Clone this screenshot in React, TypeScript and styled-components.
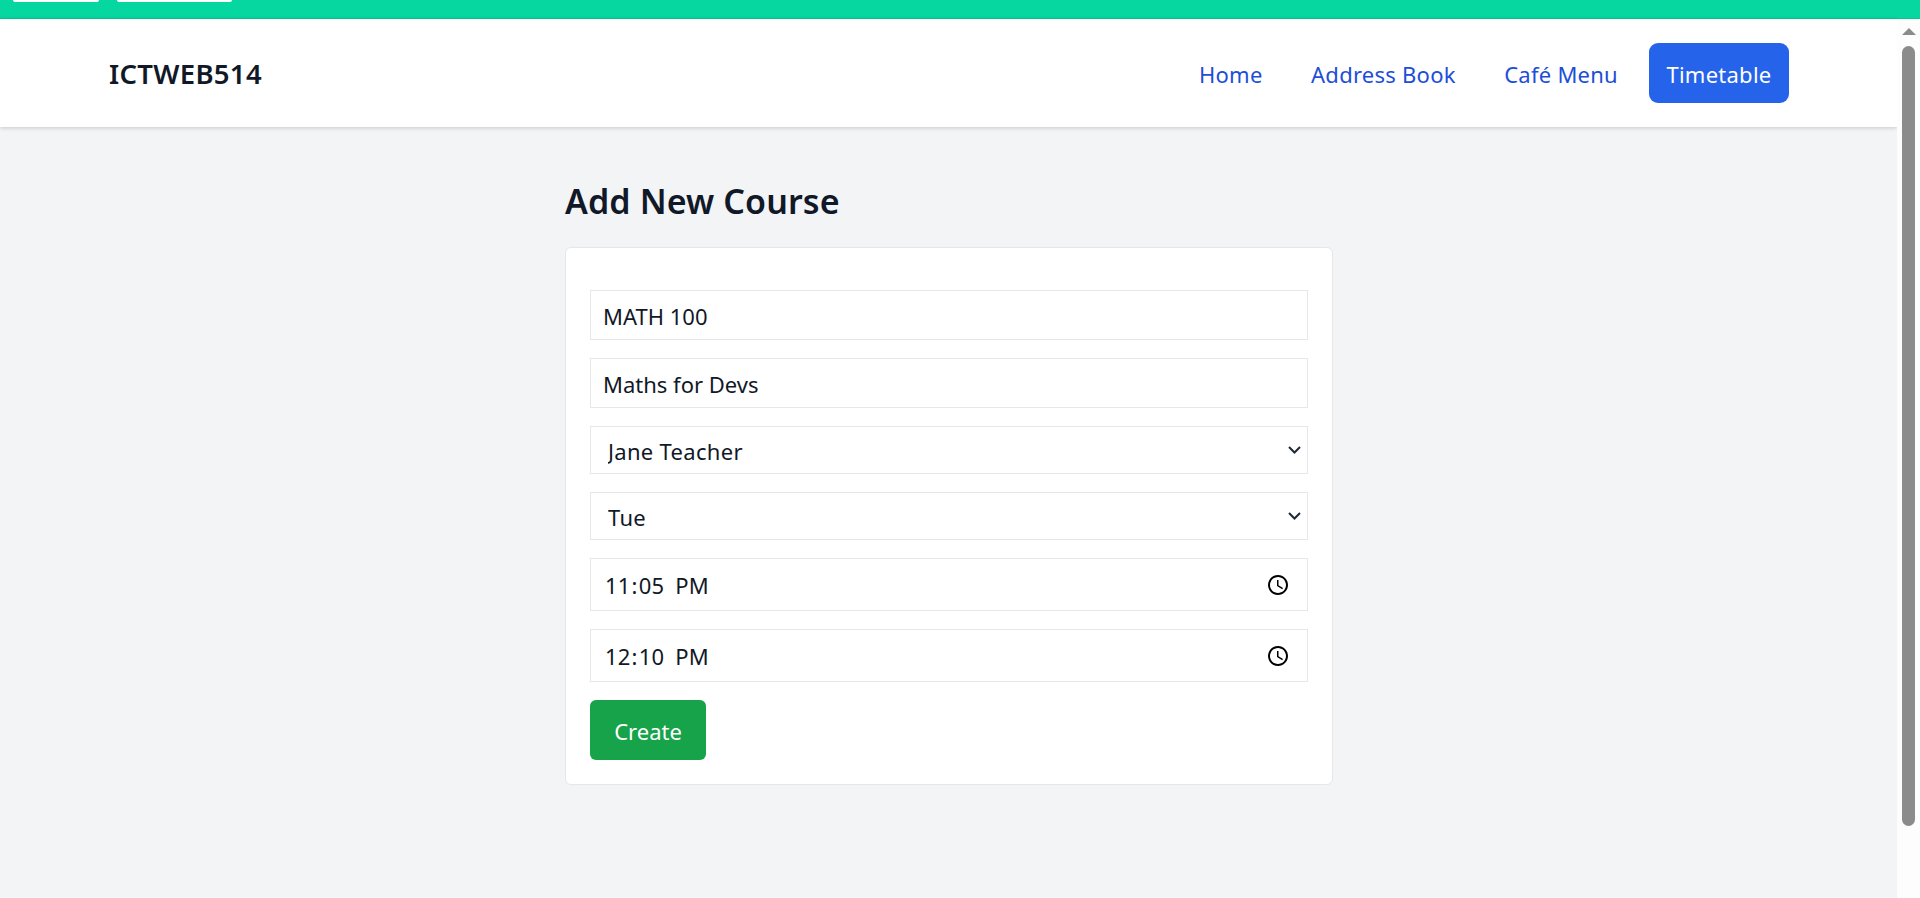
import styled, { createGlobalStyle } from "styled-components";

const GlobalStyle = createGlobalStyle`
  * {
    box-sizing: border-box;
  }

  html,
  body {
    margin: 0;
    height: 100%;
    overflow: hidden;
    background: #f3f4f6;
    font-family: "Noto Sans", "Open Sans", sans-serif;
    color: #111827;
  }
`;

function Chevron() {
  return (
    <ChevronIcon width="13" height="8" viewBox="0 0 13 8" fill="none">
      <path d="M1 1l5.5 5.5L12 1" stroke="#1f2937" strokeWidth="2" />
    </ChevronIcon>
  );
}

export default function App() {
  return (
    <>
      <GlobalStyle />
      <Shell>
        <TopStrip>
          <StripChip $width={86} />
          <StripChip $width={115} />
        </TopStrip>

        <Viewport>
          <Page>
            <Navbar>
              <Brand>ICTWEB514</Brand>
              <NavLinks>
                <NavLink href="#">Home</NavLink>
                <NavLink href="#">Address Book</NavLink>
                <NavLink href="#">Café Menu</NavLink>
                <NavLink href="#" $active>
                  Timetable
                </NavLink>
              </NavLinks>
            </Navbar>

            <Main>
              <Title>Add New Course</Title>
              <Card>
                <Field type="text" defaultValue="MATH 100" />
                <Field type="text" defaultValue="Maths for Devs" />
                <SelectWrap>
                  <Dropdown defaultValue="Jane Teacher">
                    <option>Jane Teacher</option>
                    <option>John Teacher</option>
                  </Dropdown>
                  <Chevron />
                </SelectWrap>
                <SelectWrap>
                  <Dropdown defaultValue="Tue">
                    <option>Mon</option>
                    <option>Tue</option>
                    <option>Wed</option>
                    <option>Thu</option>
                    <option>Fri</option>
                  </Dropdown>
                  <Chevron />
                </SelectWrap>
                <TimeField type="time" defaultValue="23:05" />
                <TimeField type="time" defaultValue="12:10" />
                <CreateButton type="button">Create</CreateButton>
              </Card>
            </Main>
          </Page>

          <Scrollbar>
            <ScrollArrow />
            <ScrollThumb />
          </Scrollbar>
        </Viewport>
      </Shell>
    </>
  );
}

const Shell = styled.div`
  height: 100vh;
  display: flex;
  flex-direction: column;
`;

const TopStrip = styled.div`
  height: 19px;
  flex: none;
  padding-left: 13px;
  display: flex;
  align-items: flex-start;
  gap: 18px;
  background: #06d6a0;
  border-bottom: 1px solid #05c896;
`;

const StripChip = styled.div<{ $width: number }>`
  width: ${({ $width }) => $width}px;
  height: 2px;
  background: #fff;
  border-radius: 0 0 5px 5px;
`;

const Viewport = styled.div`
  flex: 1;
  min-height: 0;
  display: flex;
`;

const Page = styled.div`
  flex: 1;
  min-width: 0;
`;

const Navbar = styled.nav`
  height: 108px;
  padding: 0 108px 0 109px;
  display: flex;
  align-items: center;
  justify-content: space-between;
  background: #fff;
  box-shadow: 0 1px 4px rgba(0, 0, 0, 0.18);
`;

const Brand = styled.div`
  font-size: 27.5px;
  font-weight: 600;
  letter-spacing: 0.3px;
  color: #111827;
`;

const NavLinks = styled.div`
  display: flex;
  align-items: center;
  gap: 13.5px;
`;

const NavLink = styled.a<{ $active?: boolean }>`
  height: 60px;
  padding: 2px 17.5px 0;
  display: flex;
  align-items: center;
  border-radius: 9px;
  font-size: 22px;
  letter-spacing: 0.25px;
  text-decoration: none;
  color: ${({ $active }) => ($active ? "#fff" : "#1d4ed8")};
  background: ${({ $active }) => ($active ? "#2563eb" : "transparent")};
`;

const Main = styled.main`
  width: 768px;
  margin-left: 565px;
  padding-top: 47px;
`;

const Title = styled.h1`
  margin: 0 0 18px;
  font-size: 34px;
  line-height: 55px;
  font-weight: 600;
  letter-spacing: 0.1px;
  color: #111827;
`;

const Card = styled.form`
  height: 538px;
  padding: 42px 24px 0;
  display: flex;
  flex-direction: column;
  align-items: flex-start;
  gap: 18px;
  background: #fff;
  border: 1px solid #e5e7eb;
  border-radius: 6px;
`;

const Field = styled.input`
  width: 100%;
  height: 50px;
  padding: 2px 12px 0;
  background: #fff;
  border: 1px solid #e5e7eb;
  border-radius: 0;
  outline: none;
  font-family: inherit;
  font-size: 22px;
  color: #111827;
`;

const SelectWrap = styled.div`
  position: relative;
  width: 100%;
  height: 48px;
`;

const Dropdown = styled.select`
  width: 100%;
  height: 100%;
  padding: 2px 17px 0;
  appearance: none;
  background: #fff;
  border: 1px solid #e5e7eb;
  border-radius: 0;
  outline: none;
  font-family: inherit;
  font-size: 22px;
  letter-spacing: 0.3px;
  color: #111827;
`;

const ChevronIcon = styled.svg`
  position: absolute;
  top: 20px;
  right: 7px;
  pointer-events: none;
`;

const TimeField = styled(Field)`
  height: 53px;
  padding: 0 17px 0 13px;
  letter-spacing: 0.2px;

  &::-webkit-calendar-picker-indicator {
    width: 24px;
    height: 24px;
    margin: 0;
    padding: 0;
  }

  &::-webkit-datetime-edit-ampm-field {
    margin-left: 5px;
  }
`;

const CreateButton = styled.button`
  width: 116px;
  height: 60px;
  padding: 2px 0 0;
  background: #16a34a;
  border: none;
  border-radius: 6px;
  font-family: inherit;
  font-size: 22px;
  color: #fff;
`;

const Scrollbar = styled.aside`
  width: 23px;
  flex: none;
  padding: 9px 5px 0;
  display: flex;
  flex-direction: column;
  align-items: center;
  background: #fdfdfd;
`;

const ScrollArrow = styled.div`
  width: 0;
  height: 0;
  border-left: 7px solid transparent;
  border-right: 7px solid transparent;
  border-bottom: 7px solid #8b8b8b;
`;

const ScrollThumb = styled.div`
  width: 13px;
  height: 780px;
  margin-top: 11px;
  background: #8b8b8b;
  border-radius: 7px;
`;
